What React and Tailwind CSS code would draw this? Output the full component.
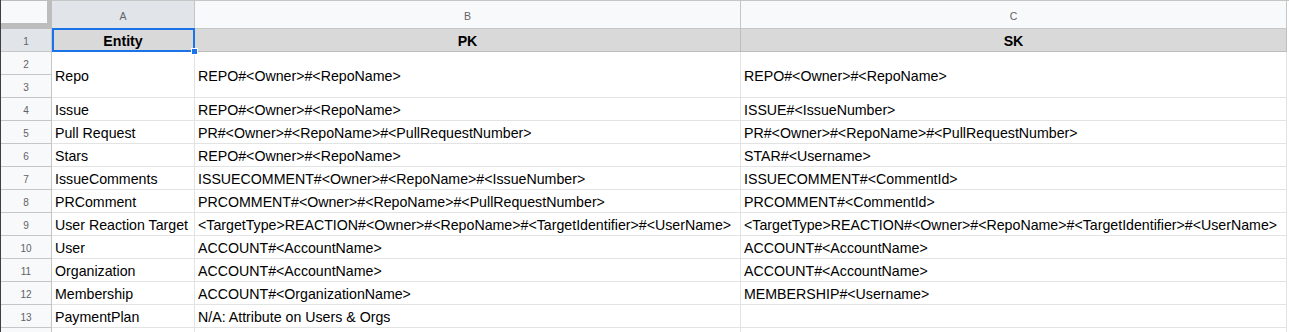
import React from "react";

const rows = [
  { n: 4, a: "Issue", b: "REPO#<Owner>#<RepoName>", c: "ISSUE#<IssueNumber>" },
  { n: 5, a: "Pull Request", b: "PR#<Owner>#<RepoName>#<PullRequestNumber>", c: "PR#<Owner>#<RepoName>#<PullRequestNumber>" },
  { n: 6, a: "Stars", b: "REPO#<Owner>#<RepoName>", c: "STAR#<Username>" },
  { n: 7, a: "IssueComments", b: "ISSUECOMMENT#<Owner>#<RepoName>#<IssueNumber>", c: "ISSUECOMMENT#<CommentId>" },
  { n: 8, a: "PRComment", b: "PRCOMMENT#<Owner>#<RepoName>#<PullRequestNumber>", c: "PRCOMMENT#<CommentId>" },
  { n: 9, a: "User Reaction Target", b: "<TargetType>REACTION#<Owner>#<RepoName>#<TargetIdentifier>#<UserName>", c: "<TargetType>REACTION#<Owner>#<RepoName>#<TargetIdentifier>#<UserName>" },
  { n: 10, a: "User", b: "ACCOUNT#<AccountName>", c: "ACCOUNT#<AccountName>" },
  { n: 11, a: "Organization", b: "ACCOUNT#<AccountName>", c: "ACCOUNT#<AccountName>" },
  { n: 12, a: "Membership", b: "ACCOUNT#<OrganizationName>", c: "MEMBERSHIP#<Username>" },
  { n: 13, a: "PaymentPlan", b: "N/A: Attribute on Users & Orgs", c: "" },
  { n: "", a: "", b: "", c: "" },
];

function RowHead({ n, selected }) {
  return (
    <div
      className={`flex items-center justify-center border-r border-b border-[#c4c7c5] pt-[2px] text-[10px] text-[#5f6368] ${
        selected ? "bg-[#e1e5ea]" : "bg-[#f8f9fa]"
      }`}
    >
      {n}
    </div>
  );
}

function Cell({ children, span }) {
  return (
    <div
      className={`flex items-center overflow-visible whitespace-nowrap border-r border-b border-[#e2e3e3] bg-white pt-[4px] pl-[3px] text-[14.2px] text-black ${
        span ? "row-span-2" : ""
      }`}
    >
      {children}
    </div>
  );
}

export default function App() {
  return (
    <div
      className="flex h-[332px] w-[1289px] overflow-hidden bg-white"
      style={{ fontFamily: '"Liberation Sans", Arial, sans-serif' }}
    >
      <div className="w-px shrink-0 bg-[#3c4043]" />
      <div className="grid flex-1 grid-cols-[51px_143px_546px_546px_1fr] grid-rows-[29px_repeat(14,23px)]">
        {/* header row */}
        <div className="border-t border-r-[5px] border-b-[6px] border-[#bdbdbd] bg-[#f8f9fa]" />
        <div className="flex items-center justify-center border-t border-r border-b border-[#c4c7c5] bg-[#e1e5ea] pt-[5px] text-[10.5px] text-[#5f6368]">
          A
        </div>
        <div className="flex items-center justify-center border-t border-r border-b border-[#c4c7c5] bg-[#f8f9fa] pt-[5px] text-[10.5px] text-[#5f6368]">
          B
        </div>
        <div className="flex items-center justify-center border-t border-r border-b border-[#c4c7c5] bg-[#f8f9fa] pt-[5px] text-[10.5px] text-[#5f6368]">
          C
        </div>
        <div className="border-t border-[#c4c7c5] bg-white" />

        {/* row 1 */}
        <RowHead n={1} selected />
        <div className="relative flex items-center justify-center border-r border-b border-[#bdbdbd] bg-[#d9d9d9] pt-[4px] text-[14.2px] font-bold text-black">
          Entity
          <div className="absolute -top-px left-0 -right-px -bottom-px border-2 border-[#1a73e8]" />
          <div className="absolute -right-[4px] -bottom-[4px] h-[7px] w-[7px] border border-white bg-[#1a73e8]" />
        </div>
        <div className="flex items-center justify-center border-r border-b border-[#bdbdbd] bg-[#d9d9d9] pt-[4px] text-[14.2px] font-bold text-black">
          PK
        </div>
        <div className="flex items-center justify-center border-r border-b border-[#bdbdbd] bg-[#d9d9d9] pt-[4px] text-[14.2px] font-bold text-black">
          SK
        </div>
        <div className="bg-white" />

        {/* rows 2-3 merged */}
        <RowHead n={2} />
        <Cell span>Repo</Cell>
        <Cell span>{"REPO#<Owner>#<RepoName>"}</Cell>
        <Cell span>{"REPO#<Owner>#<RepoName>"}</Cell>
        <div className="row-span-2 bg-white" />
        <RowHead n={3} />

        {rows.map((r, i) => (
          <React.Fragment key={i}>
            <RowHead n={r.n} />
            <Cell>{r.a}</Cell>
            <Cell>{r.b}</Cell>
            <Cell>{r.c}</Cell>
            <div className="bg-white" />
          </React.Fragment>
        ))}
      </div>
    </div>
  );
}
